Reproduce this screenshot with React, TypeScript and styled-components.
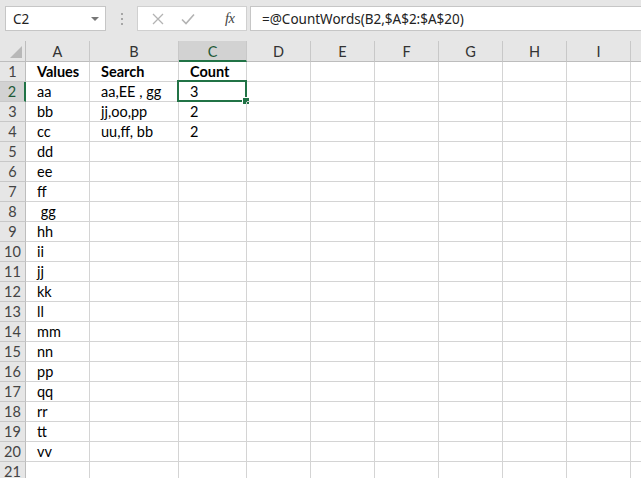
import React from "react";
import styled, { createGlobalStyle } from "styled-components";

const GREEN = "#217346";
const COLS = ["A", "B", "C", "D", "E", "F", "G", "H", "I", ""];
const WIDTHS = [64, 89, 68, 64, 64, 64, 64, 64, 64, 64];
const ROWS = 21;

const columnA = [
  "Values", "aa", "bb", "cc", "dd", "ee", "ff", " gg", "hh", "ii",
  "jj", "kk", "ll", "mm", "nn", "pp", "qq", "rr", "tt", "vv", "",
];
const columnB = ["Search", "aa,EE , gg", "jj,oo,pp", "uu,ff, bb"];
const columnC = ["Count", "3", "2", "2"];

const GlobalStyle = createGlobalStyle`
  html, body {
    margin: 0;
    padding: 0;
    background: #fff;
    overflow: hidden;
  }
  body {
    font-family: "Lato", "Liberation Sans", sans-serif;
  }
`;

const Page = styled.div`
  width: 641px;
  height: 478px;
  overflow: hidden;
  background: #fff;
`;

/* formula bar strip */
const Toolbar = styled.div`
  height: 41px;
  box-sizing: border-box;
  background: #e6e6e6;
  display: flex;
  align-items: flex-start;
  padding: 6px 0 0 5px;
  font-family: "Noto Sans", "Open Sans", sans-serif;
`;

const NameBox = styled.div`
  width: 101px;
  height: 25px;
  box-sizing: border-box;
  background: #fff;
  border: 1px solid #c6c6c6;
  display: flex;
  align-items: center;
  justify-content: space-between;
  padding: 0 6px 0 7px;
  font-size: 13.5px;
  color: #222;
`;

const DropArrow = styled.span`
  width: 0;
  height: 0;
  border-left: 4px solid transparent;
  border-right: 4px solid transparent;
  border-top: 4px solid #777;
`;

const Grip = styled.div`
  width: 31px;
  height: 25px;
  display: flex;
  flex-direction: column;
  align-items: center;
  justify-content: center;
  gap: 3px;

  span {
    width: 2px;
    height: 2px;
    background: #a6a6a6;
  }
`;

const FxButtons = styled.div`
  width: 110px;
  height: 25px;
  box-sizing: border-box;
  background: #fff;
  border: 1px solid #d0d0d0;
  display: flex;
  align-items: center;
  padding-left: 14px;
  gap: 17px;
`;

const FxLabel = styled.span`
  margin-left: 13px;
  font-family: "Liberation Serif", serif;
  font-style: italic;
  font-size: 14.5px;
  color: #444;
  letter-spacing: -0.5px;
`;

const FormulaInput = styled.div`
  flex: 1;
  height: 25px;
  box-sizing: border-box;
  margin-left: 3px;
  background: #fff;
  border: 1px solid #c6c6c6;
  border-right: none;
  display: flex;
  align-items: center;
  padding-left: 11px;
  font-size: 13.5px;
  color: #222;
  white-space: nowrap;
`;

/* sheet grid */
const Sheet = styled.div`
  display: grid;
  grid-template-columns: 26px ${WIDTHS.map((w) => `${w}px`).join(" ")};
  grid-template-rows: 21px;
  grid-auto-rows: 20px;
`;

const Corner = styled.div`
  background: #e6e6e6;
  border-right: 1px solid #bdbdbd;
  border-bottom: 1px solid #bdbdbd;
  box-sizing: border-box;
  position: relative;

  &::after {
    content: "";
    position: absolute;
    right: 3px;
    bottom: 3px;
    width: 0;
    height: 0;
    border-left: 12px solid transparent;
    border-bottom: 12px solid #b8b8b8;
  }
`;

const ColHeader = styled.div<{ $active?: boolean }>`
  box-sizing: border-box;
  background: ${(p) => (p.$active ? "#d2d2d2" : "#e6e6e6")};
  border-right: 1px solid #c8c8c8;
  border-bottom: ${(p) => (p.$active ? `2px solid ${GREEN}` : "1px solid #bdbdbd")};
  display: flex;
  align-items: center;
  justify-content: center;
  padding-top: ${(p) => (p.$active ? "1px" : "0")};
  font-size: 14.5px;
  color: ${(p) => (p.$active ? "#1e5a38" : "#333")};
`;

const RowHeader = styled.div<{ $active?: boolean }>`
  box-sizing: border-box;
  background: ${(p) => (p.$active ? "#d2d2d2" : "#e6e6e6")};
  border-bottom: 1px solid #c8c8c8;
  border-right: ${(p) => (p.$active ? `2px solid ${GREEN}` : "1px solid #bdbdbd")};
  display: flex;
  align-items: center;
  justify-content: center;
  font-size: 14.5px;
  color: ${(p) => (p.$active ? "#1e5a38" : "#444")};
`;

const Cell = styled.div<{ $bold?: boolean }>`
  position: relative;
  box-sizing: border-box;
  border-right: 1px solid #d4d4d4;
  border-bottom: 1px solid #d4d4d4;
  display: flex;
  align-items: center;
  padding: 0 0 0 11px;
  font-size: 14.5px;
  font-weight: ${(p) => (p.$bold ? 700 : 400)};
  color: #000;
  white-space: pre;
  overflow: visible;
`;

const Selection = styled.div`
  position: absolute;
  left: -2px;
  top: -2px;
  right: -1px;
  bottom: -1px;
  border: 2px solid ${GREEN};
  pointer-events: none;

  &::after {
    content: "";
    position: absolute;
    right: -5px;
    bottom: -5px;
    width: 6px;
    height: 6px;
    background: ${GREEN};
    border: 1px solid #fff;
  }
`;

const CancelIcon = () => (
  <svg width="12" height="12" viewBox="0 0 12 12">
    <path d="M1 1 L11 11 M11 1 L1 11" stroke="#b3b3b3" strokeWidth="1.3" fill="none" />
  </svg>
);

const EnterIcon = () => (
  <svg width="14" height="12" viewBox="0 0 14 12">
    <path d="M1 6.5 L5 10.5 L13 1.5" stroke="#b3b3b3" strokeWidth="1.6" fill="none" />
  </svg>
);

const valueAt = (row: number, col: number) => {
  if (col === 0) return columnA[row] ?? "";
  if (col === 1) return columnB[row] ?? "";
  if (col === 2) return columnC[row] ?? "";
  return "";
};

export default function App() {
  return (
    <Page>
      <GlobalStyle />
      <Toolbar>
        <NameBox>
          <span>C2</span>
          <DropArrow />
        </NameBox>
        <Grip>
          <span />
          <span />
          <span />
        </Grip>
        <FxButtons>
          <CancelIcon />
          <EnterIcon />
          <FxLabel>fx</FxLabel>
        </FxButtons>
        <FormulaInput>=@CountWords(B2,$A$2:$A$20)</FormulaInput>
      </Toolbar>
      <Sheet>
        <Corner />
        {COLS.map((c, ci) => (
          <ColHeader key={ci} $active={c === "C"}>
            {c}
          </ColHeader>
        ))}
        {Array.from({ length: ROWS }, (_, r) => (
          <React.Fragment key={r}>
            <RowHeader $active={r === 1}>{r + 1}</RowHeader>
            {COLS.map((_c, ci) => (
              <Cell key={ci} $bold={r === 0}>
                {valueAt(r, ci)}
                {r === 1 && ci === 2 && <Selection />}
              </Cell>
            ))}
          </React.Fragment>
        ))}
      </Sheet>
    </Page>
  );
}
